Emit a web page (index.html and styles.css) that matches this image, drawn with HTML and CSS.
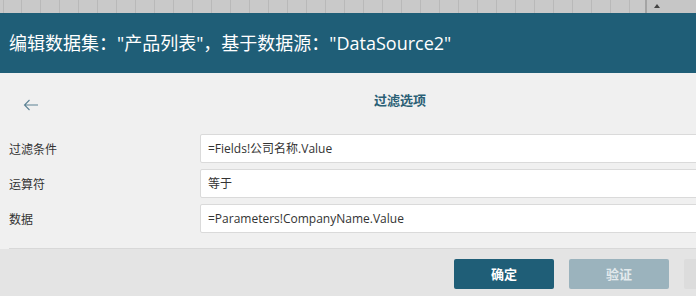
FILE: index.html
```html
<!DOCTYPE html>
<html lang="zh-CN">
<head>
    <meta charset="UTF-8" />
    <title>编辑数据集</title>
    <link rel="stylesheet" href="styles.css">
</head>
<body>
<div class="strip">
    <div class="grid"></div>
    <div class="strip_r"><span class="up"></span></div>
</div>
<div id="dialog">
    <h1 class="dlg_title">编辑数据集："产品列表"，基于数据源："DataSource2"</h1>
    <div class="dlg_body">
        <div class="nav">
            <a class="back" href="javascript:;">
                <svg width="16" height="12" viewBox="0 0 16 12"><path d="M15 6H1.5M6.5 1L1.5 6l5 5" fill="none" stroke="#5c8294" stroke-width="1.1"/></svg>
            </a>
            <h2>过滤选项</h2>
        </div>
        <div class="rows">
            <div class="row">
                <label>过滤条件</label>
                <div class="field">=Fields!公司名称.Value</div>
            </div>
            <div class="row">
                <label>运算符</label>
                <div class="field">等于</div>
            </div>
            <div class="row">
                <label>数据</label>
                <div class="field">=Parameters!CompanyName.Value</div>
            </div>
        </div>
    </div>
    <div class="dlg_foot">
        <a class="btn ok" href="javascript:;">确定</a>
        <a class="btn off" href="javascript:;">验证</a>
        <a class="btn cancel" href="javascript:;"></a>
    </div>
</div>
</body>
</html>
```

FILE: styles.css
```css
body{
    margin:0;
    width:696px;
    height:296px;
    overflow:hidden;
    background:#e4e4e4;
    font-family:"Open Sans","Noto Sans CJK SC",sans-serif;
}
.strip{
    height:13px;
    display:flex;
    background:#c9c9c9;
}
.grid{
    width:645px;
    background:repeating-linear-gradient(90deg,#c9c9c9 0,#c9c9c9 2px,#b9b9b9 2px,#b9b9b9 3px,#c9c9c9 3px,#c9c9c9 19px);
    background-position:19px 0;
    border-right:2px solid #a4a4a4;
}
.strip_r{
    flex:1;
    background:#c6c6c6;
    position:relative;
}
.up{
    position:absolute;
    left:7px;
    top:4px;
    border-left:3px solid transparent;
    border-right:3px solid transparent;
    border-bottom:4px solid #444;
}
#dialog{
    width:800px;
}
.dlg_title{
    margin:0;
    height:60px;
    line-height:60px;
    padding-left:9px;
    background:#1f5e77;
    color:#fff;
    font-size:18px;
    font-weight:normal;
    white-space:nowrap;
}
.dlg_body{
    background:#f0f0f0;
    height:175px;
    border-bottom:1px solid #d8d8d8;
    margin-left:9px;
    box-shadow:-9px 0 0 #f0f0f0;
}
.nav{
    height:52px;
    display:flex;
    align-items:center;
    position:relative;
}
.back{
    display:block;
    margin:1px 0 0 14px;
    height:12px;
}
.nav h2{
    position:absolute;
    left:-9px;
    right:0;
    margin:0;
    text-align:center;
    font-size:13px;
    color:#2a5f75;
    font-weight:bold;
    pointer-events:none;
}
.rows{
    display:flex;
    flex-direction:column;
    gap:6px;
    padding-top:9px;
}
.row{
    display:flex;
    align-items:center;
}
.row label{
    width:191px;
    font-size:12px;
    color:#333;
}
.field{
    flex:1;
    height:27px;
    line-height:27px;
    padding-left:7px;
    background:#fff;
    border:1px solid #dadada;
    border-radius:2px;
    font-size:12px;
    color:#333;
    margin-right:16px;
}
.dlg_foot{
    display:flex;
    justify-content:flex-end;
    gap:15px;
    padding:10px 16px 0 0;
}
.btn{
    width:100px;
    height:30px;
    line-height:30px;
    text-align:center;
    border-radius:2px;
    font-size:13px;
    font-weight:bold;
    text-decoration:none;
}
.ok{
    background:#1f5e77;
    color:#fff;
}
.off{
    background:#9bb3bd;
    color:#e3eaed;
}
.cancel{
    background:#dcdcdc;
}
```
